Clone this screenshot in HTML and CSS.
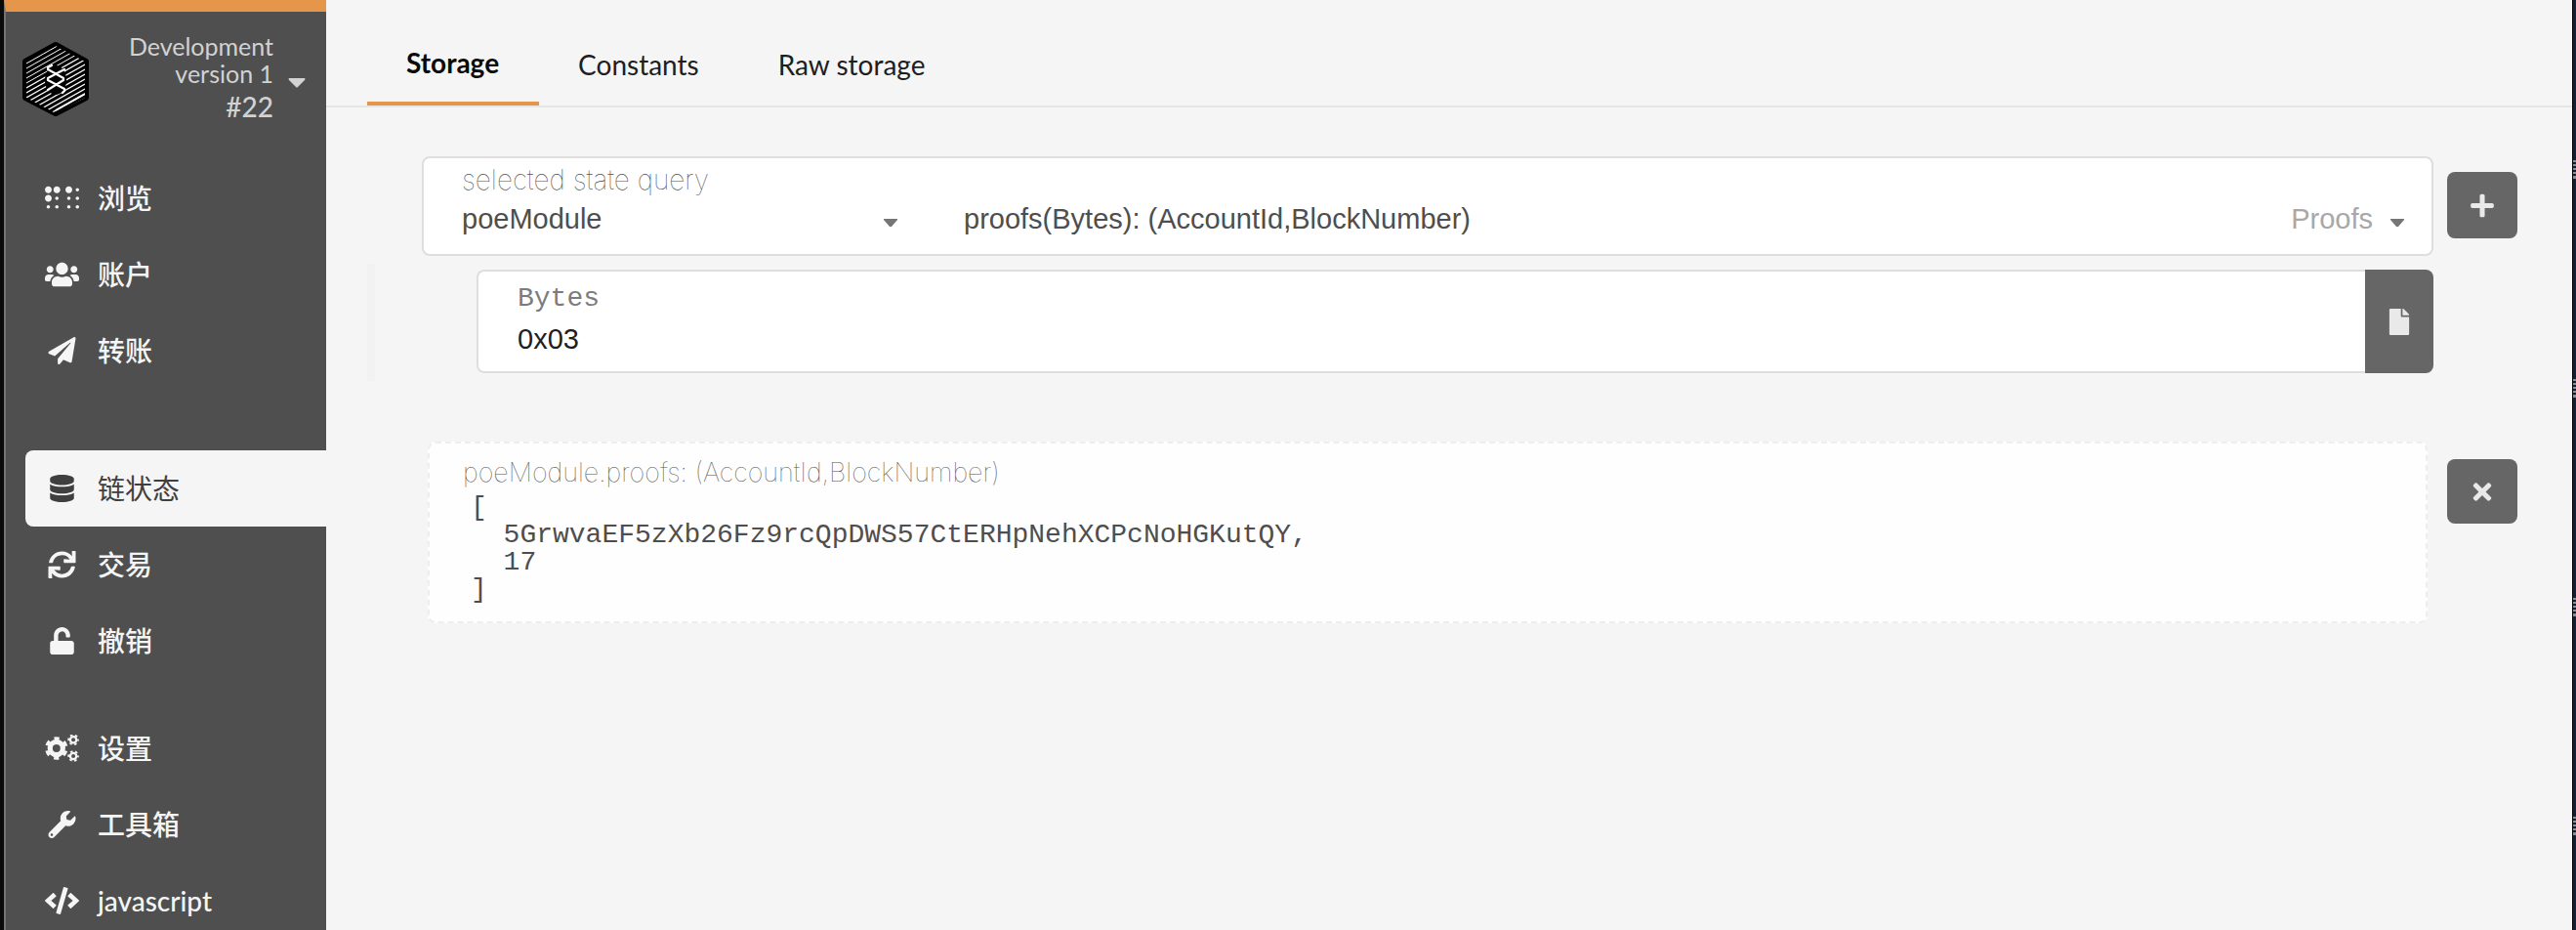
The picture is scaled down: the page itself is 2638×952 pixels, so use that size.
FILE: index.html
```html
<!DOCTYPE html>
<html lang="zh-CN">
<head>
<meta charset="utf-8">
<title>链状态</title>
<link rel="stylesheet" href="styles.css">
</head>
<body>
<div class="app">
  <aside class="sidebar">
    <button class="chain" type="button">
      <svg class="chain-logo" viewBox="0 0 68 76" aria-hidden="true">
        <defs><clipPath id="hex"><path d="M34 4 64 20v37L34 73 4 57V20z"/></clipPath></defs>
        <path d="M34 3 65 20v37L34 73 3 57V20z" fill="#000" stroke="#000" stroke-width="6" stroke-linejoin="round"/>
        <g clip-path="url(#hex)" stroke="#fff" fill="none">
          <path stroke-width="1" d="M4 22 64-12M4 27 64-7M4 32 64-2M4 37 64 3M4 42 64 8"/>
          <path stroke-width="1.3" d="M4 47 64 13M4 52 64 18M4 57 64 23M4 62 64 28M4 67 64 33M4 72 64 38M4 77 64 43"/>
          <path stroke-width="1.3" d="M4 82 64 48M4 87 64 53"/>
          <path stroke-width="2" d="M34 70 64 53M34 75 64 58"/>
        </g>
        <ellipse cx="34" cy="39" rx="11" ry="15" fill="#000"/>
        <path d="M30 24l-4 2v2l16 9v2L26 49M43 28 26 37v2l17 9v2l-2 2" fill="none" stroke="#fff" stroke-width="2.200" stroke-linecap="round" stroke-linejoin="round"/>
      </svg>
      <span class="chain-text">
        <span class="chain-name">Development<br>version 1</span>
        <span class="chain-block">#22</span>
      </span>
      <svg class="chain-caret" viewBox="0 0 18 10" aria-hidden="true"><path d="M1 0h16q1 1 0 2L10 9q-1 1-2 0L1 2Q0 1 1 0z"/></svg>
    </button>
    <nav class="menu">
      <div class="menu-group">
        <a class="menu-item" href="#explorer"><svg class="menu-icon" viewBox="0 0 640 512" aria-hidden="true"><path d="M128 256c0 35.300-28.700 64-64 64S0 291.300 0 256s28.700-64 64-64 64 28.700 64 64zM64 384c-17.700 0-32 14.300-32 32s14.300 32 32 32 32-14.300 32-32-14.300-32-32-32zm0-352C28.700 32 0 60.700 0 96s28.700 64 64 64 64-28.700 64-64-28.700-64-64-64zm160 192c-17.700 0-32 14.300-32 32s14.300 32 32 32 32-14.300 32-32-14.300-32-32-32zm0 160c-17.700 0-32 14.300-32 32s14.300 32 32 32 32-14.300 32-32-14.300-32-32-32zm0-352c-35.300 0-64 28.700-64 64s28.700 64 64 64 64-28.700 64-64-28.700-64-64-64zm224 192c-17.700 0-32 14.300-32 32s14.300 32 32 32 32-14.300 32-32-14.300-32-32-32zm0 160c-17.700 0-32 14.300-32 32s14.300 32 32 32 32-14.300 32-32-14.300-32-32-32zm0-352c-35.300 0-64 28.700-64 64s28.700 64 64 64 64-28.700 64-64-28.700-64-64-64zm160 192c-17.700 0-32 14.300-32 32s14.300 32 32 32 32-14.300 32-32-14.300-32-32-32zm0 160c-17.700 0-32 14.300-32 32s14.300 32 32 32 32-14.300 32-32-14.300-32-32-32zm0-320c-17.700 0-32 14.300-32 32s14.300 32 32 32 32-14.300 32-32-14.300-32-32-32z"/></svg>浏览</a>
        <a class="menu-item" href="#accounts"><svg class="menu-icon" viewBox="0 0 640 512" aria-hidden="true"><path d="M96 224c35.300 0 64-28.700 64-64s-28.700-64-64-64-64 28.700-64 64 28.700 64 64 64zm448 0c35.300 0 64-28.700 64-64s-28.700-64-64-64-64 28.700-64 64 28.700 64 64 64zm32 32h-64c-17.600 0-33.500 7.100-45.100 18.600 40.300 22.100 68.900 62 75.100 109.400h66c17.700 0 32-14.300 32-32v-32c0-35.300-28.700-64-64-64zm-256 0c61.900 0 112-50.100 112-112S381.900 32 320 32 208 82.100 208 144s50.100 112 112 112zm76.800 32h-8.300c-20.800 10-43.900 16-68.500 16s-47.600-6-68.500-16h-8.300C179.600 288 128 339.600 128 403.200V432c0 26.500 21.500 48 48 48h288c26.500 0 48-21.500 48-48v-28.800c0-63.600-51.600-115.200-115.200-115.200zm-223.700-13.400C161.500 263.100 145.600 256 128 256H64c-35.300 0-64 28.700-64 64v32c0 17.700 14.300 32 32 32h65.900c6.300-47.400 34.900-87.300 75.200-109.400z"/></svg>账户</a>
        <a class="menu-item" href="#transfer"><svg class="menu-icon" viewBox="0 0 512 512" aria-hidden="true"><path d="M476 3.200L12.500 270.600c-18.100 10.400-15.800 35.600 2.200 43.200L121 358.400l287.300-253.200c5.500-4.900 13.300 2.600 8.600 8.300L176 407v80.500c0 23.600 28.500 32.900 42.500 15.800L282 426l124.600 52.200c14.200 6 30.400-2.900 33-18.200l72-432C515 7.800 493.300-6.800 476 3.200z"/></svg>转账</a>
      </div>
      <div class="menu-group menu-group-chain">
        <a class="menu-item is-active" href="#chainstate" aria-current="page"><svg class="menu-icon" viewBox="0 0 448 512" aria-hidden="true"><path d="M448 73.143v45.714C448 159.143 347.667 192 224 192S0 159.143 0 118.857V73.143C0 32.857 100.333 0 224 0s224 32.857 224 73.143zM448 176v102.857C448 319.143 347.667 352 224 352S0 319.143 0 278.857V176c48.125 33.143 136.208 48.572 224 48.572S399.874 209.143 448 176zm0 160v102.857C448 479.143 347.667 512 224 512S0 479.143 0 438.857V336c48.125 33.143 136.208 48.572 224 48.572S399.874 369.143 448 336z"/></svg>链状态</a>
        <a class="menu-item" href="#extrinsics"><svg class="menu-icon" viewBox="0 0 512 512" aria-hidden="true"><path d="M440.650 12.570l4 82.770A247.160 247.160 0 0 0 255.830 8C134.730 8 33.910 94.920 12.290 209.820A12 12 0 0 0 24.090 224h49.050a12 12 0 0 0 11.670-9.260 175.910 175.910 0 0 1 317-56.940l-101.460-4.860a12 12 0 0 0-12.570 12v47.410a12 12 0 0 0 12 12H500a12 12 0 0 0 12-12V12a12 12 0 0 0-12-12h-47.370a12 12 0 0 0-11.980 12.570zM255.830 432a175.610 175.610 0 0 1-146-77.800l101.800 4.870a12 12 0 0 0 12.570-12v-47.400a12 12 0 0 0-12-12H12a12 12 0 0 0-12 12V500a12 12 0 0 0 12 12h47.350a12 12 0 0 0 12-12.600l-4.150-82.570A247.170 247.170 0 0 0 255.830 504c121.110 0 221.930-86.920 243.550-201.820a12 12 0 0 0-11.800-14.180h-49.050a12 12 0 0 0-11.670 9.260A175.860 175.860 0 0 1 255.830 432z"/></svg>交易</a>
        <a class="menu-item" href="#sudo"><svg class="menu-icon" viewBox="0 0 448 512" aria-hidden="true"><path d="M400 256H152V152.900c0-39.600 31.700-72.500 71.300-72.900 40-.4 72.700 32.100 72.700 72v16c0 13.300 10.700 24 24 24h32c13.300 0 24-10.700 24-24v-16C376 68 307.500-.3 223.500 0 139.500.3 72 69.500 72 153.500V256H48c-26.500 0-48 21.500-48 48v160c0 26.500 21.500 48 48 48h352c26.500 0 48-21.500 48-48V304c0-26.500-21.500-48-48-48z"/></svg>撤销</a>
      </div>
      <div class="menu-group menu-group-tools">
        <a class="menu-item" href="#settings"><svg class="menu-icon" viewBox="0 0 640 512" aria-hidden="true"><g fill="none" stroke="currentColor"><circle cx="216" cy="256" r="120" stroke-width="95"/><circle cx="216" cy="256" r="185" stroke-width="60" stroke-dasharray="95 98.700" stroke-dashoffset="-49.400"/><circle cx="532" cy="96" r="58" stroke-width="42"/><circle cx="532" cy="96" r="90" stroke-width="32" stroke-dasharray="47 47.250" stroke-dashoffset="23.500"/><circle cx="532" cy="402" r="58" stroke-width="42"/><circle cx="532" cy="402" r="90" stroke-width="32" stroke-dasharray="47 47.250" stroke-dashoffset="23.500"/></g></svg>设置</a>
        <a class="menu-item" href="#toolbox"><svg class="menu-icon" viewBox="0 0 512 512" aria-hidden="true"><path d="M507.730 109.100c-2.240-9.030-13.540-12.090-20.120-5.510l-74.360 74.360-67.880-11.310-11.310-67.880 74.360-74.360c6.620-6.620 3.430-17.900-5.660-20.160-47.380-11.740-99.550.91-136.580 37.930-39.640 39.640-50.550 97.100-34.050 147.200L18.740 402.760c-24.990 24.990-24.990 65.510 0 90.500 24.990 24.990 65.510 24.990 90.500 0l213.210-213.210c50.120 16.710 107.470 5.680 147.370-34.220 37.070-37.070 49.700-89.320 37.910-136.730zM64 472c-13.250 0-24-10.750-24-24 0-13.260 10.750-24 24-24s24 10.740 24 24c0 13.250-10.750 24-24 24z"/></svg>工具箱</a>
        <a class="menu-item" href="#js"><svg class="menu-icon" viewBox="0 0 640 512" aria-hidden="true"><path d="M278.900 511.500l-61-17.700c-6.400-1.800-10-8.500-8.200-14.900L346.200 8.700c1.800-6.400 8.500-10 14.900-8.200l61 17.700c6.400 1.800 10 8.500 8.200 14.900L293.800 503.300c-1.900 6.400-8.500 10.100-14.900 8.200zm-114-112.200l43.500-46.400c4.600-4.900 4.300-12.700-.8-17.200L117 256l90.600-79.700c5.100-4.500 5.500-12.300.8-17.200l-43.500-46.400c-4.500-4.800-12.100-5.100-17-.5L3.800 247.200c-5.100 4.700-5.100 12.800 0 17.500l144.100 135.100c4.900 4.600 12.500 4.400 17-.5zm327.200.6l144.100-135.100c5.100-4.700 5.100-12.800 0-17.500L492.100 112.100c-4.800-4.500-12.400-4.300-17 .5L431.600 159c-4.600 4.900-4.300 12.700.8 17.200L523 256l-90.600 79.700c-5.100 4.500-5.500 12.300-.8 17.200l43.500 46.400c4.500 4.900 12.100 5.100 17 .6z"/></svg>javascript</a>
      </div>
    </nav>
  </aside>

  <main class="content">
    <nav class="tabs">
      <a class="tab is-active" href="#storage" aria-current="page">Storage</a>
      <a class="tab" href="#constants">Constants</a>
      <a class="tab" href="#raw">Raw storage</a>
    </nav>

    <section class="query">
      <div class="query-row">
        <div class="field field-query">
          <label class="field-label" for="module">selected state query</label>
          <div class="query-selects">
            <div class="dropdown dropdown-module">
              <select class="dropdown-select" id="module"><option>poeModule</option></select>
              <svg class="caret" viewBox="0 0 14 8" aria-hidden="true"><path d="M0 0h14v1L8 8H6L0 1z"/></svg>
            </div>
            <div class="dropdown dropdown-method">
              <select class="dropdown-select" aria-label="method"><option>proofs(Bytes): (AccountId,BlockNumber)</option></select>
              <span class="dropdown-hint">Proofs</span>
              <svg class="caret" viewBox="0 0 14 8" aria-hidden="true"><path d="M0 0h14v1L8 8H6L0 1z"/></svg>
            </div>
          </div>
        </div>
        <button class="square-button" type="button" aria-label="add"><svg class="button-icon" viewBox="0 0 448 512" aria-hidden="true"><path d="M416 208H272V64c0-17.670-14.330-32-32-32h-32c-17.670 0-32 14.330-32 32v144H32c-17.670 0-32 14.330-32 32v32c0 17.670 14.330 32 32 32h144v144c0 17.670 14.330 32 32 32h32c17.670 0 32-14.330 32-32V304h144c17.670 0 32-14.330 32-32v-32c0-17.670-14.330-32-32-32z"/></svg></button>
      </div>

      <div class="params">
        <div class="param">
          <div class="field field-param">
            <label class="field-label field-label-type" for="param">Bytes</label>
            <input class="field-input" id="param" type="text" value="0x03">
          </div>
          <button class="file-button" type="button" aria-label="file"><svg class="button-icon" viewBox="0 0 384 512" aria-hidden="true"><path d="M224 136V0H24C10.700 0 0 10.700 0 24v464c0 13.300 10.700 24 24 24h336c13.300 0 24-10.700 24-24V160H248c-13.200 0-24-10.800-24-24zm160-14.100v6.100H256V0h6.100c6.400 0 12.500 2.500 17 7l97.900 98c4.500 4.500 7 10.600 7 16.900z"/></svg></button>
        </div>
      </div>
    </section>

    <section class="result">
      <div class="output">
        <h2 class="output-title">poeModule.proofs: (AccountId,BlockNumber)</h2>
        <pre class="output-value">[
  5GrwvaEF5zXb26Fz9rcQpDWS57CtERHpNehXCPcNoHGKutQY,
  17
]</pre>
      </div>
      <button class="square-button square-button-remove" type="button" aria-label="remove"><svg class="button-icon" viewBox="0 0 352 512" aria-hidden="true"><path d="M242.720 256l100.070-100.070c12.280-12.280 12.280-32.190 0-44.480l-22.240-22.240c-12.280-12.280-32.190-12.280-44.480 0L176 189.280 75.930 89.210c-12.280-12.280-32.190-12.280-44.480 0L9.210 111.450c-12.280 12.280-12.280 32.190 0 44.480L109.280 256 9.210 356.070c-12.280 12.280-12.280 32.190 0 44.480l22.240 22.240c12.280 12.280 32.200 12.280 44.480 0L176 322.720l100.070 100.070c12.280 12.280 32.200 12.280 44.480 0l22.240-22.240c12.280-12.280 12.280-32.190 0-44.480L242.720 256z"/></svg></button>
    </section>
  </main>
  <div class="desktop-edge"></div>
</div>
</body>
</html>
```
FILE: styles.css
```css
* {
  box-sizing: border-box;
}

body {
  margin: 0;
  background: #f5f5f5;
  color: #4e4e4e;
  font: 28px/40px Lato, "Noto Sans CJK SC", sans-serif;
}

.app {
  display: flex;
  height: 100vh;
  overflow: hidden;
  border-left: 4px solid #0a0a0a;
}

button,
input,
select {
  margin: 0;
  padding: 0;
  border: 0;
  background: none;
  font: inherit;
  color: inherit;
}

/* Sidebar */

.sidebar {
  flex: none;
  width: 330px;
  border-left: 2px solid #747474;
  border-top: 12px solid #e6964a;
  background: #4f4f4f;
  color: #f5f5f5;
}

.chain {
  display: flex;
  align-items: center;
  width: 100%;
  padding: 21px 21px 0 17px;
  color: #d2d2d2;
  text-align: right;
}

.chain-logo {
  flex: none;
  width: 68px;
  height: 76px;
}

.chain-text {
  flex: 1;
  padding-right: 15px;
}

.chain-name,
.chain-block {
  display: block;
}

.chain-name {
  font-size: 25px;
  line-height: 28px;
}

.chain-block {
  font-weight: 500;
  line-height: 40px;
}

.chain-caret {
  flex: none;
  width: 18px;
  height: 10px;
  margin-top: 8px;
  fill: #d2d2d2;
}

.menu {
  padding: 35px 0 0 20px;
}

.menu-group-chain {
  margin-top: 63px;
}

.menu-group-tools {
  margin-top: 32px;
}

.menu-item {
  display: flex;
  align-items: center;
  gap: 19px;
  height: 78px;
  padding-left: 20px;
  border-radius: 8px 0 0 8px;
  color: #f5f5f5;
  font-weight: 500;
  text-decoration: none;
}

.menu-item.is-active {
  background: #f5f5f5;
  color: #3f3f3f;
  font-weight: 400;
}

.menu-icon {
  flex: none;
  width: 35px;
  height: 28px;
  fill: currentColor;
}

/* Tabs */

.content {
  flex: 1;
  min-width: 0;
}

.tabs {
  display: flex;
  height: 110px;
  padding-left: 42px;
  border-bottom: 2px solid #e6e6e6;
}

.tab {
  padding: 46px 41px 0 40px;
  color: #1e1e1e;
  text-decoration: none;
}

.tab.is-active {
  padding-top: 44px;
  border-bottom: 4px solid #e6964a;
  color: #0a0a0a;
  font-weight: 700;
}

/* State query */

.query,
.result {
  font-family: "Liberation Sans", Arial, sans-serif;
}

.query {
  padding: 50px 56px 0 42px;
}

.query-row {
  display: flex;
  align-items: flex-start;
  gap: 14px;
  padding-left: 56px;
}

.field {
  flex: 1;
  min-width: 0;
  border: 2px solid #dedede;
  border-radius: 8px;
  background: #fff;
}

.field-query {
  padding: 2px 28px 16px 39px;
}

.field-label,
.output-title {
  display: block;
  margin: 0;
  color: #555;
  font: 100 28px/40px Inter, sans-serif;
}

.query-selects {
  display: flex;
  font-size: 29px;
}

.dropdown {
  display: flex;
  align-items: center;
}

.dropdown-module {
  flex: 0 0 446px;
}

.dropdown-method {
  flex: 1;
  padding-left: 68px;
}

.dropdown-select {
  flex: 1;
  min-width: 0;
  height: 40px;
  appearance: none;
}

.dropdown-hint {
  margin-right: 18px;
  color: #a8a8a8;
}

.caret {
  flex: none;
  width: 14px;
  height: 8px;
  margin-top: 7px;
  fill: #767676;
}

.square-button {
  flex: none;
  display: flex;
  align-items: center;
  justify-content: center;
  width: 72px;
  height: 68px;
  margin-top: 16px;
  border-radius: 8px;
  background: #666;
}

.square-button-remove {
  height: 66px;
  margin-top: 18px;
}

.button-icon {
  width: 28px;
  height: 27px;
  fill: #e9e9e9;
}

.params {
  margin: 8px 86px 0 0;
  padding: 6px 0 8px 104px;
  border-left: 8px solid #f2f2f2;
}

.param {
  display: flex;
}

.field-param {
  padding: 8px 40px 12px;
  border-right: 0;
  border-radius: 8px 0 0 8px;
}

.field-label-type {
  color: #7c7c7c;
  font: 400 28px/40px "Liberation Mono", "Courier New", monospace;
}

.field-input {
  display: block;
  width: 100%;
  height: 42px;
  color: #1e1e1e;
  font-size: 29px;
}

.file-button {
  flex: none;
  display: flex;
  align-items: center;
  justify-content: center;
  width: 70px;
  border-radius: 0 8px 8px 0;
  background: #666;
}

/* Result */

.result {
  display: flex;
  align-items: flex-start;
  gap: 20px;
  padding: 62px 56px 0 104px;
}

.output {
  flex: 1;
  min-width: 0;
  padding: 10px 34px 18px;
  border: 2px dashed #eee;
  border-radius: 8px;
  background: #fefefe;
}

.output-title {
  font-size: 27px;
}

.output-value {
  margin: 2px 8px 0;
  font: 400 28px/28px "Liberation Mono", "Courier New", monospace;
}

/* Strip of desktop beside the window */

.desktop-edge {
  flex: none;
  width: 4px;
  border-left: 1px solid #000;
  background: repeating-linear-gradient(#10203a 0 164px, #8d8f94 164px 166px, #10203a 166px 168px, #8d8f94 168px 170px, #10203a 170px 172px, #8d8f94 172px 174px, #10203a 174px 176px, #8d8f94 176px 178px, #10203a 178px 180px, #8d8f94 180px 183px, #10203a 183px 224px);
}
```
